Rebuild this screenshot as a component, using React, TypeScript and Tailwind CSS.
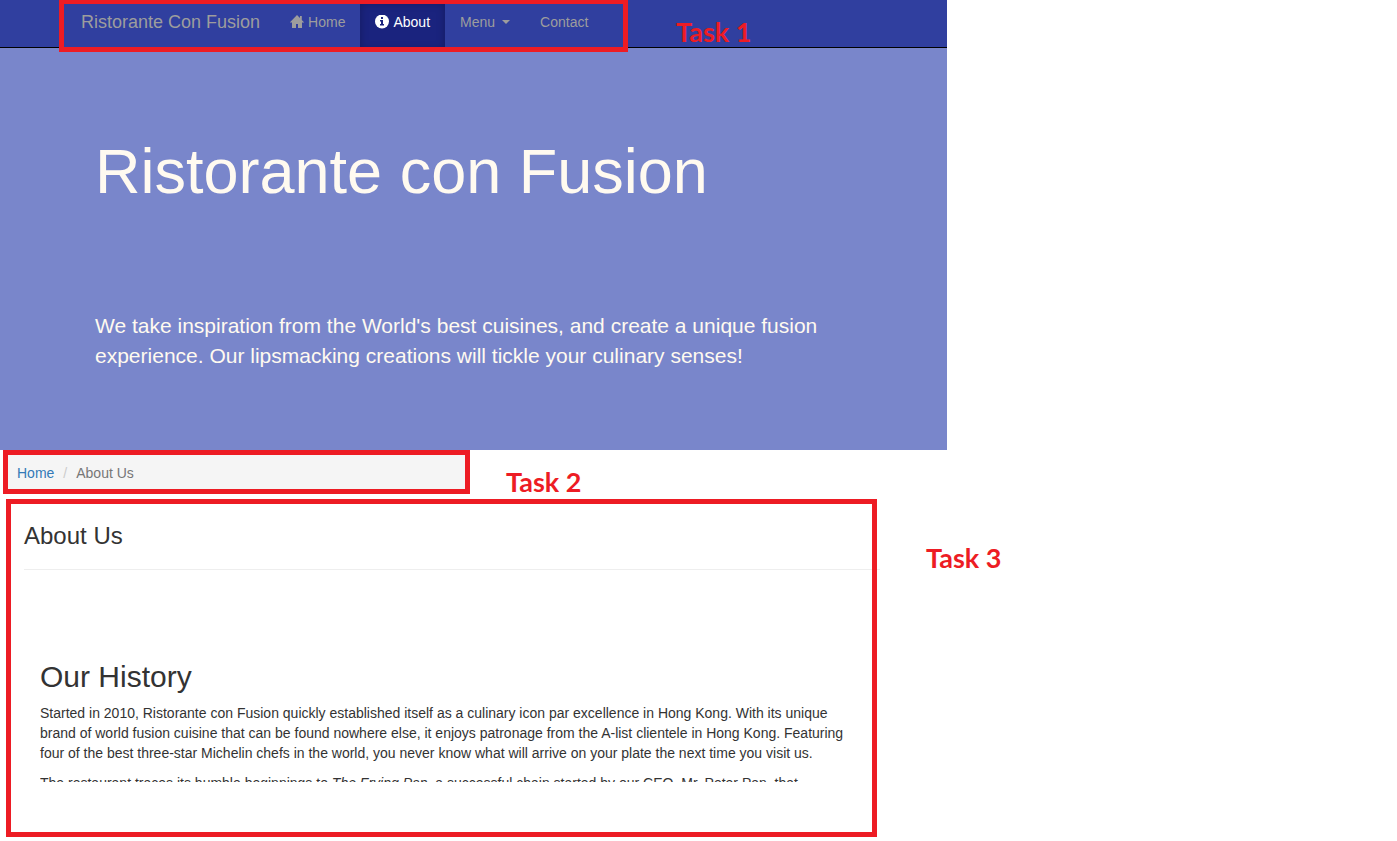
import type { ReactNode } from "react";

function HomeIcon() {
  return (
    <svg viewBox="0 0 14 14" className="size-3.5 shrink-0" fill="currentColor" aria-hidden="true">
      <path d="M7 0 -.4 7.6H2V13h4V9h2v4h4V7.6h2.4L11.8 4.900V1H10v2.100z" />
    </svg>
  );
}

function InfoIcon() {
  return (
    <svg viewBox="0 0 14 14" className="size-3.5 shrink-0" aria-hidden="true">
      <circle cx="7" cy="6.500" r="7" fill="currentColor" />
      <path d="M6 2h2v2H6zM5 5h3v4h1v1.500H5V9h1V6.500H5z" fill="#1a237e" />
    </svg>
  );
}

function Highlight({ className }: { className: string }) {
  return (
    <span
      aria-hidden="true"
      className={"pointer-events-none absolute border-5 border-[#ed1c24] " + className}
    />
  );
}

function TaskLabel({ className, children }: { className: string; children: ReactNode }) {
  return (
    <strong
      className={
        "absolute font-['Lato',sans-serif] text-[27px] leading-8 font-bold whitespace-nowrap text-[#ed1c24] " +
        className
      }
    >
      {children}
    </strong>
  );
}

const navLink = "flex items-center gap-1 px-[15px] pt-3 pb-[15px] text-sm text-[#9d9d9d]";

export default function App() {
  return (
    <div className="min-h-screen bg-white font-['Liberation_Sans',Arial,sans-serif] text-sm leading-5 text-[#333]">
      <div className="max-w-[947px]">
        <nav className="relative flex border-b border-black bg-[#303f9f] pl-[66px]">
          <a href="#top" className="px-[15px] pt-3 pb-[15px] text-lg leading-5 text-[#9d9d9d]">
            Ristorante Con Fusion
          </a>
          <ul className="flex">
            <li>
              <a href="#home" className={navLink}>
                <HomeIcon />
                Home
              </a>
            </li>
            <li>
              <a
                href="#about"
                aria-current="page"
                className="flex items-center gap-1 bg-[#1a237e] px-[15px] pt-3 pb-[15px] text-sm text-white shadow-[inset_0_3px_9px_rgba(0,0,0,0.25)]"
              >
                <InfoIcon />
                About
              </a>
            </li>
            <li>
              <button type="button" className={navLink}>
                Menu
                <span className="ml-[3px] border-x-4 border-t-4 border-x-transparent border-t-[#9d9d9d]" />
              </button>
            </li>
            <li>
              <a href="#contact" className={navLink}>
                Contact
              </a>
            </li>
          </ul>
          <Highlight className="-top-px left-[59px] h-[53px] w-[569px]" />
          <TaskLabel className="top-4 left-[676px]">Task 1</TaskLabel>
        </nav>
        <header className="bg-[#7986cb] px-[95px] pt-[88px] pb-[79px] text-[#fffaf0]">
          <h1 className="text-[63px] leading-[70px]">Ristorante con Fusion</h1>
          <p className="mt-[105px] max-w-[740px] text-[21px] leading-[30px]">
            We take inspiration from the World's best cuisines, and create a unique fusion experience.
            Our lipsmacking creations will tickle your culinary senses!
          </p>
        </header>
      </div>

      <nav
        aria-label="Breadcrumb"
        className="relative ml-[3px] max-w-[467px] border-5 border-[#ed1c24] bg-[#f5f5f5] px-[9px] pt-2 pb-1.5"
      >
        <ol className="flex">
          <li>
            <a href="#home" className="text-[#337ab7]">
              Home
            </a>
          </li>
          <li className="text-[#777]">
            <span className="px-[9px] text-[#ccc]">/</span>About Us
          </li>
        </ol>
        <TaskLabel className="top-[11px] left-[498px]">Task 2</TaskLabel>
      </nav>

      <main className="relative mt-[5px] ml-1.5 max-w-[871px] pt-[23px] pb-[55px] pl-[18px]">
        <h3 className="text-2xl leading-7">About Us</h3>
        <hr className="mt-[19px] -mr-[3px] border-[#eee]" />
        <article className="mt-[90px] px-4">
          <h2 className="text-3xl leading-[33px]">Our History</h2>
          <p className="mt-2.5">
            Started in 2010, Ristorante con Fusion quickly established itself as a culinary icon par
            excellence in Hong Kong. With its unique brand of world fusion cuisine that can be found
            nowhere else, it enjoys patronage from the A-list clientele in Hong Kong. Featuring four
            of the best three-star Michelin chefs in the world, you never know what will arrive on
            your plate the next time you visit us.
          </p>
          <p className="mt-2.5 h-[9px] overflow-hidden">
            The restaurant traces its humble beginnings to <em>The Frying Pan</em>, a successful chain
            started by our CEO, Mr. Peter Pan, that
          </p>
        </article>
        <Highlight className="inset-0" />
        <TaskLabel className="top-[43px] left-[920px]">Task 3</TaskLabel>
      </main>
    </div>
  );
}
